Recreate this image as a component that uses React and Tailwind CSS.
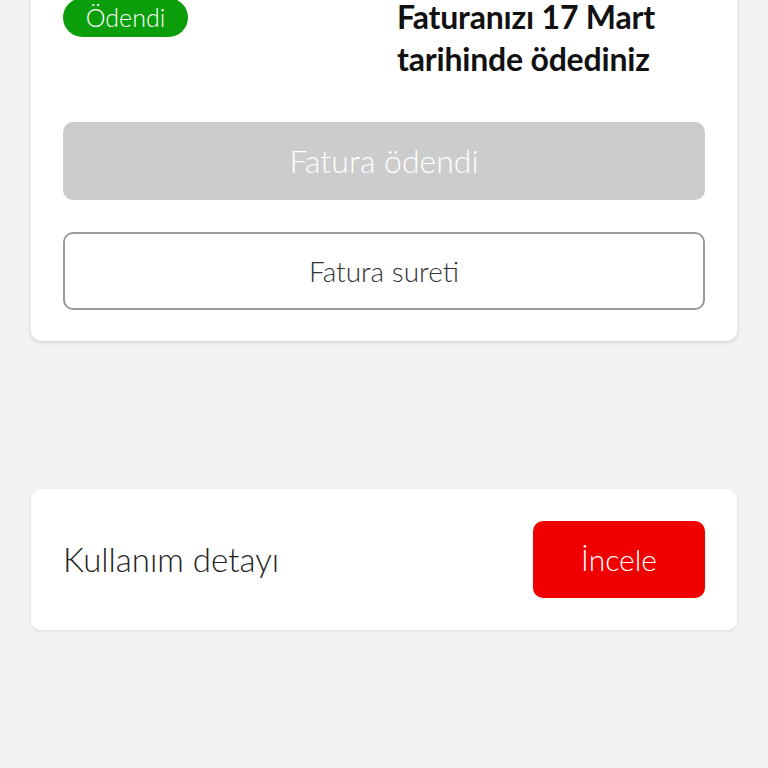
import React from "react";

export default function App() {
  return (
    <div className="w-[768px] h-[768px] bg-[#f2f2f2] overflow-hidden" style={{ fontFamily: "Lato, 'Open Sans', sans-serif" }}>
      <div className="mx-[31px] bg-white rounded-b-[10px] shadow-[0_2px_4px_rgba(0,0,0,0.12)] px-[32px] pb-[31px]">
        <div className="flex items-start h-[90px] -mt-[2px]">
          <div className="w-[334px]">
            <span className="inline-flex items-center justify-center h-[39px] w-[125px] rounded-full bg-[#0a9e0a] text-white text-[25px] font-light leading-none">Ödendi</span>
          </div>
          <div className="text-[#111] text-[32px] font-bold leading-[42px] tracking-[-0.2px] w-[300px] -mt-[2px]">
            Faturanızı 17 Mart tarihinde ödediniz
          </div>
        </div>
        <div className="mt-[34px] h-[78px] rounded-[10px] bg-[#cccccc] flex items-center justify-center text-white text-[32px] font-light">
          Fatura ödendi
        </div>
        <div className="mt-[32px] h-[78px] rounded-[10px] border-2 border-[#9a9a9a] flex items-center justify-center text-[#333] text-[28px] font-light">
          Fatura sureti
        </div>
      </div>
      <div className="mx-[31px] mt-[148px] bg-white rounded-[10px] shadow-[0_1px_3px_rgba(0,0,0,0.1)] px-[32px] py-[32px] flex items-center justify-between">
        <span className="text-[#222] text-[33px] font-light">Kullanım detayı</span>
        <button className="w-[172px] h-[77px] rounded-[10px] bg-[#f00000] text-white text-[30px] font-light">İncele</button>
      </div>
    </div>
  );
}
